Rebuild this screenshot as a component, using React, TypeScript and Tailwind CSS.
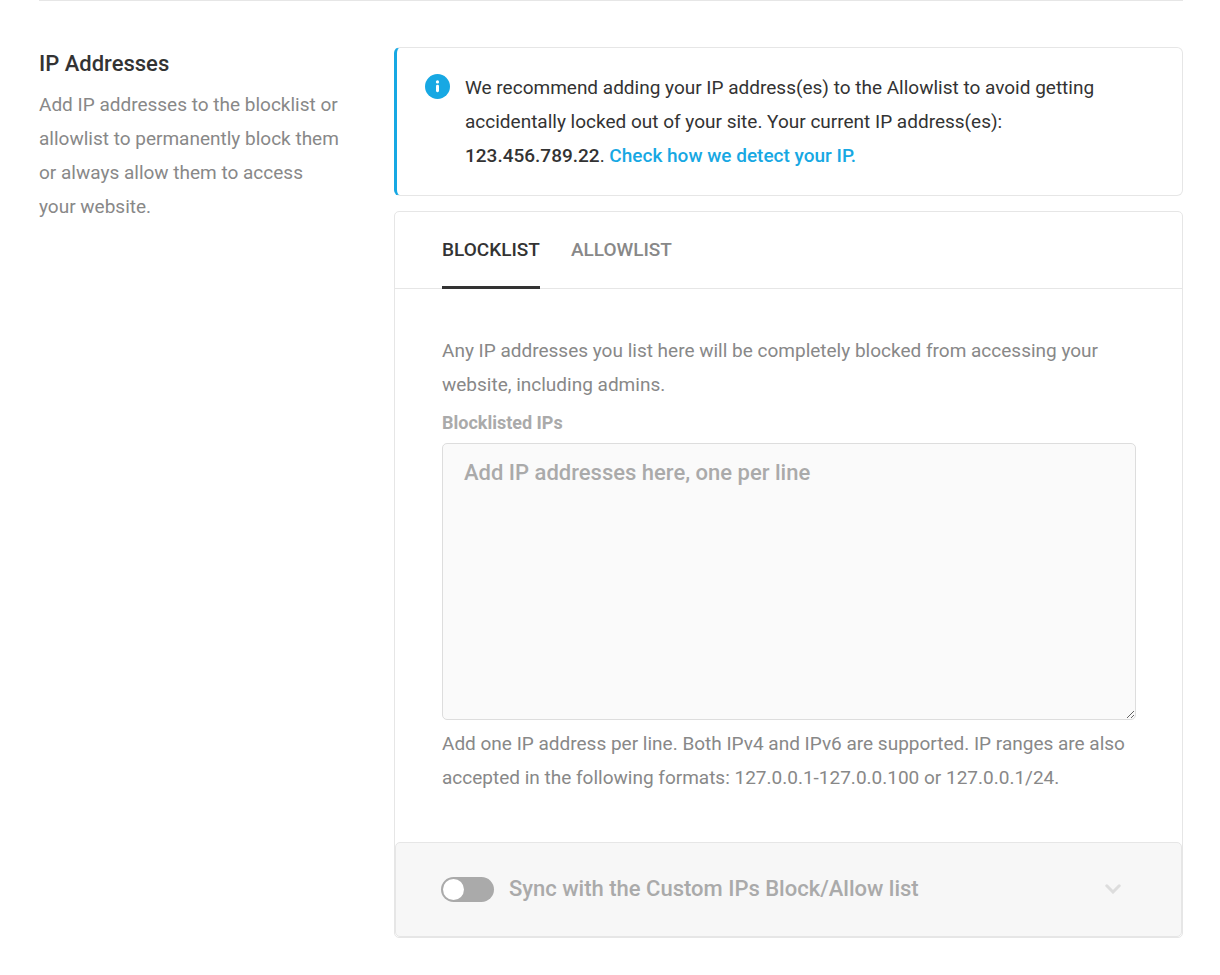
import { useState } from "react";

const tabs = [
  { id: "blocklist", label: "Blocklist" },
  { id: "allowlist", label: "Allowlist" },
];

function InfoIcon() {
  return (
    <svg viewBox="0 0 25 25" className="mt-[3px] size-[25px] shrink-0" aria-hidden="true">
      <circle cx="12.5" cy="12.5" r="12.5" fill="#17a8e3" />
      <circle cx="12.5" cy="7.9" r="1.6" fill="#fff" />
      <rect x="11" y="10.8" width="3" height="7.4" rx="1.4" fill="#fff" />
    </svg>
  );
}

function Notice() {
  return (
    <div className="flex gap-[15px] rounded-[6px] border border-l-[3px] border-[#e6e6e6] border-l-[#17a8e3] pt-[23px] pr-[46px] pb-[22px] pl-[28px] text-[#333333]">
      <InfoIcon />
      <p className="min-w-0 flex-1">
        We recommend adding your IP address(es) to the Allowlist to avoid getting accidentally
        locked out of your site. Your current IP address(es):{" "}
        <strong className="font-medium">123.456.789.22</strong>.{" "}
        <a href="#detect-ip" className="font-medium text-[#17a8e3]">
          Check how we detect your IP.
        </a>
      </p>
    </div>
  );
}

function SyncRow() {
  const [on, setOn] = useState(false);
  return (
    <div className="flex items-center rounded-[5px] border border-[#e6e6e6] bg-[#f7f7f7] pt-[27px] pr-[60px] pb-[28px] pl-[45px]">
      <label className="flex flex-1 items-center gap-[15px] text-[22px] leading-[38px] font-medium text-[#aaaaaa]">
        <input
          type="checkbox"
          role="switch"
          checked={on}
          onChange={(e) => setOn(e.target.checked)}
          className="flex h-[25px] w-[53px] shrink-0 appearance-none items-center rounded-full bg-[#aaaaaa] p-[2px] before:size-[21px] before:rounded-full before:bg-white before:content-[''] checked:justify-end checked:bg-[#17a8e3]"
        />
        Sync with the Custom IPs Block/Allow list
      </label>
      <button type="button" aria-label="Expand sync options">
        <svg viewBox="0 0 16 10" className="h-[10px] w-[16px]" aria-hidden="true">
          <path
            d="M1.8 1.8l6.2 6.2 6.2-6.2"
            fill="none"
            stroke="#dddddd"
            strokeWidth="3"
            strokeLinecap="round"
          />
        </svg>
      </button>
    </div>
  );
}

export default function App() {
  const [active, setActive] = useState("blocklist");
  return (
    <main className="bg-white pr-[37px] pl-[39px] font-['Roboto',sans-serif] text-[19px] leading-[34px] text-[#888888]">
      <section className="flex items-start gap-[51px] border-t border-[#e6e6e6] pt-[46px] pb-[37px]">
        <div className="w-[304px] shrink-0">
          <h2 className="text-[22px] leading-[34px] font-medium text-[#333333]">IP Addresses</h2>
          <p className="mt-[7px]">
            Add IP addresses to the blocklist or allowlist to permanently block them or always
            allow them to access your website.
          </p>
        </div>

        <div className="min-w-0 flex-1">
          <Notice />

          <div className="mt-[15px] rounded-[5px] border border-[#e6e6e6]">
            <div role="tablist" className="flex gap-[31px] border-b border-[#e6e6e6] px-[47px]">
              {tabs.map((t) => (
                <button
                  key={t.id}
                  type="button"
                  role="tab"
                  aria-selected={active === t.id}
                  onClick={() => setActive(t.id)}
                  className="-mb-px border-b-[3px] border-transparent pt-[21px] pb-[19px] font-medium uppercase aria-selected:border-[#333333] aria-selected:text-[#333333]"
                >
                  {t.label}
                </button>
              ))}
            </div>

            <div className="pt-[45px] pr-[46px] pb-[47px] pl-[47px]">
              <p>
                Any IP addresses you list here will be completely blocked from accessing your
                website, including admins.
              </p>
              <label
                htmlFor="ips"
                className="mt-[8px] block text-[18px] leading-[25px] font-bold text-[#aaaaaa]"
              >
                Blocklisted IPs
              </label>
              <textarea
                id="ips"
                placeholder="Add IP addresses here, one per line"
                className="mt-[8px] block h-[277px] w-full resize-y rounded-[5px] border border-[#dddddd] bg-[#fafafa] px-[21px] py-[12px] text-[22px] leading-[34px] font-medium text-[#333333] placeholder:text-[#aaaaaa]"
              />
              <p className="mt-[7px]">
                Add one IP address per line. Both IPv4 and IPv6 are supported. IP ranges are also
                accepted in the following formats: 127.0.0.1-127.0.0.100 or 127.0.0.1/24.
              </p>
            </div>

            <SyncRow />
          </div>
        </div>
      </section>
    </main>
  );
}
